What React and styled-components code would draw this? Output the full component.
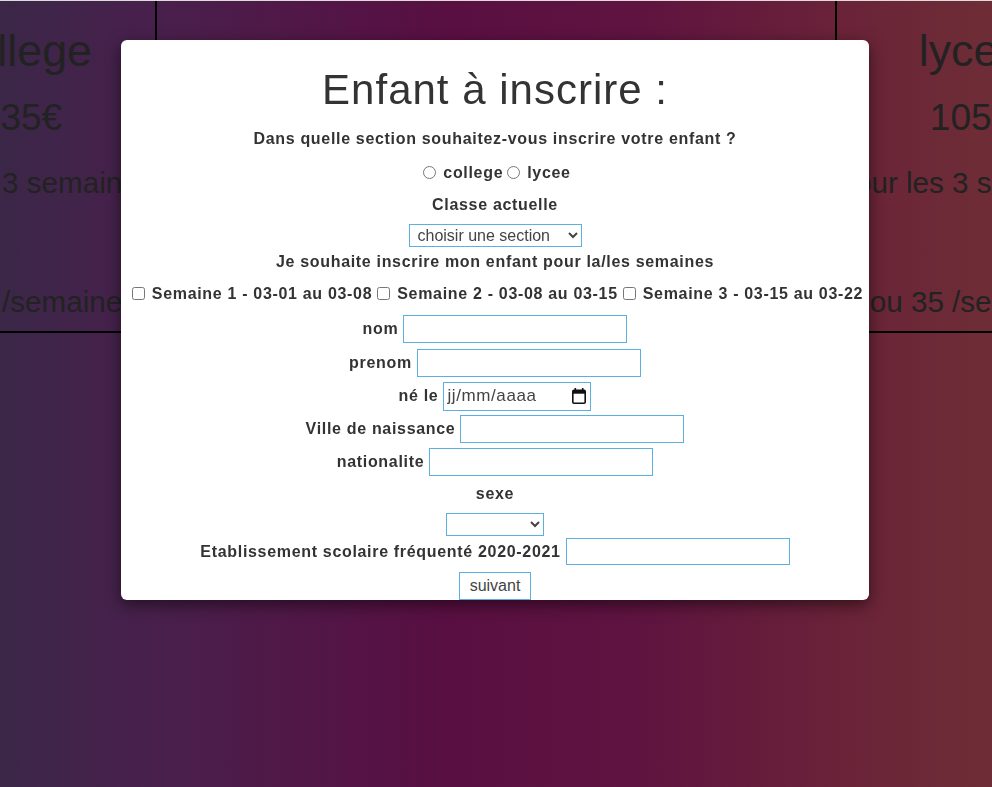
import React from 'react'
import styled, { createGlobalStyle } from 'styled-components'

const GlobalStyle = createGlobalStyle`
  html, body {
    margin: 0;
    padding: 0;
  }
  body {
    font-family: "Liberation Sans", Arial, sans-serif;
    min-height: 787px;
    overflow: hidden;
    background: linear-gradient(to right, #3b2748 0%, #48204c 15%, #590f42 45%, #5f1440 65%, #6a2338 85%, #6e2d36 100%);
  }
`

const Pricing = styled.div`
  display: flex;
  justify-content: center;
  width: 992px;
  border-top: 1px solid #dcdcdc;
`

const Column = styled.div`
  flex: 0 0 ${(p) => p.$width}px;
  min-width: 0;
  box-sizing: border-box;
  height: 332px;
  border-bottom: 2px solid #000;
  border-left: ${(p) => (p.$side === 'right' ? '2px solid #000' : 'none')};
  border-right: ${(p) => (p.$side === 'left' ? '2px solid #000' : 'none')};
  display: flex;
  flex-direction: column;
  align-items: center;
  color: #222;
  white-space: nowrap;
`

const Section = styled.h2`
  margin: 24px 0 0;
  font-size: 44.8px;
  font-weight: normal;
`

const Price = styled.p`
  margin: 21px 0 0;
  font-size: 37px;
`

const Note = styled.p`
  margin: ${(p) => p.$gap}px 0 0;
  font-size: 29.6px;
`

const Modal = styled.div`
  position: fixed;
  top: 40px;
  left: 121px;
  width: 748px;
  height: 560px;
  background: #fff;
  border-radius: 6px;
  box-shadow: 0 5px 15px rgba(0, 0, 0, 0.5);
  overflow: hidden;
  display: flex;
  flex-direction: column;
  align-items: center;
  text-align: center;
  color: #333;
`

const Title = styled.h1`
  margin: 26px 0 0;
  font-size: 42px;
  font-weight: normal;
  letter-spacing: 1px;
  line-height: 48px;
`

const Label = styled.div`
  margin-top: ${(p) => p.$gap}px;
  font-size: 16px;
  font-weight: bold;
  letter-spacing: 0.68px;
  line-height: 18px;
  white-space: nowrap;
`

const Choice = styled.label`
  display: inline;
  input {
    margin: 3px 7px 0 ${(p) => p.$lead || 4}px;
    vertical-align: -1px;
  }
`

const Field = styled.div`
  margin-top: ${(p) => p.$gap}px;
  display: flex;
  align-items: center;
  gap: 5px;
  font-size: 16px;
  font-weight: bold;
  letter-spacing: 0.68px;
  white-space: nowrap;
`

const TextInput = styled.input`
  box-sizing: border-box;
  width: 224px;
  height: ${(p) => p.$h || 28}px;
  border: 1px solid #5bb0e0;
  padding: 1px 3px;
  font-family: "Liberation Sans", Arial, sans-serif;
  font-size: 16px;
  outline: none;
`

const Select = styled.select`
  box-sizing: border-box;
  margin-top: ${(p) => p.$gap}px;
  width: ${(p) => p.$width}px;
  height: 23px;
  border: 1px solid #5bb0e0;
  border-radius: 0;
  background: #fff;
  color: #444;
  font-family: "Liberation Sans", Arial, sans-serif;
  font-size: 16px;
  padding: 0 2px 0 4px;
`

const DateBox = styled.div`
  box-sizing: border-box;
  width: 148px;
  height: 29px;
  border: 1px solid #5bb0e0;
  display: flex;
  align-items: center;
  justify-content: space-between;
  padding: 0 4px 0 3px;
  font-weight: normal;
  font-size: 17px;
  letter-spacing: 0.6px;
  color: #444;
`

const Button = styled.button`
  box-sizing: border-box;
  margin-top: 7px;
  width: 72px;
  height: 28px;
  border: 1px solid #5bb0e0;
  background: #fff;
  color: #444;
  font-family: "Liberation Sans", Arial, sans-serif;
  font-size: 16px;
  padding: 0;
`

const CalendarIcon = () => (
  <svg width="14" height="16" viewBox="0 0 14 16">
    <rect x="2.5" y="0" width="1.6" height="3" fill="#111" />
    <rect x="9.9" y="0" width="1.6" height="3" fill="#111" />
    <rect x="0.8" y="2.3" width="12.4" height="12.9" rx="1.2" fill="none" stroke="#111" strokeWidth="1.6" />
    <rect x="0.8" y="2.3" width="12.4" height="3.4" fill="#111" />
  </svg>
)

const weeks = ['Semaine 1 - 03-01 au 03-08', 'Semaine 2 - 03-08 au 03-15', 'Semaine 3 - 03-15 au 03-22']

export default function App() {
  return (
    <>
      <GlobalStyle />
      <Pricing>
        <Column $width={270} $side="left">
          <Section>college</Section>
          <Price>135€</Price>
          <Note $gap={27}>pour les 3 semaines</Note>
          <Note $gap={85}>ou 45 /semaine</Note>
        </Column>
        <Column $width={678} />
        <Column $width={270} $side="right">
          <Section>lycee</Section>
          <Price>105€</Price>
          <Note $gap={27}>pour les 3 semaines</Note>
          <Note $gap={85}>ou 35 /semaine</Note>
        </Column>
      </Pricing>

      <Modal>
        <Title>Enfant à inscrire :</Title>
        <Label $gap={16}>Dans quelle section souhaitez-vous inscrire votre enfant ?</Label>
        <Label $gap={15}>
          <Choice>
            <input type="radio" name="section" />college
          </Choice>
          <Choice>
            <input type="radio" name="section" />lycee
          </Choice>
        </Label>
        <Label $gap={14}>Classe actuelle</Label>
        <Select $gap={10} $width={173} defaultValue="">
          <option value="">choisir une section</option>
        </Select>
        <Label $gap={6}>Je souhaite inscrire mon enfant pour la/les semaines</Label>
        <Label $gap={13}>
          {weeks.map((w) => (
            <Choice key={w} $lead={5}>
              <input type="checkbox" />{w}
            </Choice>
          ))}
        </Label>
        <Field $gap={12}>
          nom <TextInput type="text" />
        </Field>
        <Field $gap={5.5}>
          prenom <TextInput type="text" />
        </Field>
        <Field $gap={5}>
          né le
          <DateBox>
            <span>jj/mm/aaaa</span>
            <CalendarIcon />
          </DateBox>
        </Field>
        <Field $gap={4.5}>
          Ville de naissance <TextInput type="text" />
        </Field>
        <Field $gap={5}>
          nationalite <TextInput type="text" />
        </Field>
        <Label $gap={9}>sexe</Label>
        <Select $gap={10} $width={98} defaultValue="">
          <option value=""></option>
        </Select>
        <Field $gap={2}>
          Etablissement scolaire fréquenté 2020-2021 <TextInput type="text" $h={27} />
        </Field>
        <Button>suivant</Button>
      </Modal>
    </>
  )
}
